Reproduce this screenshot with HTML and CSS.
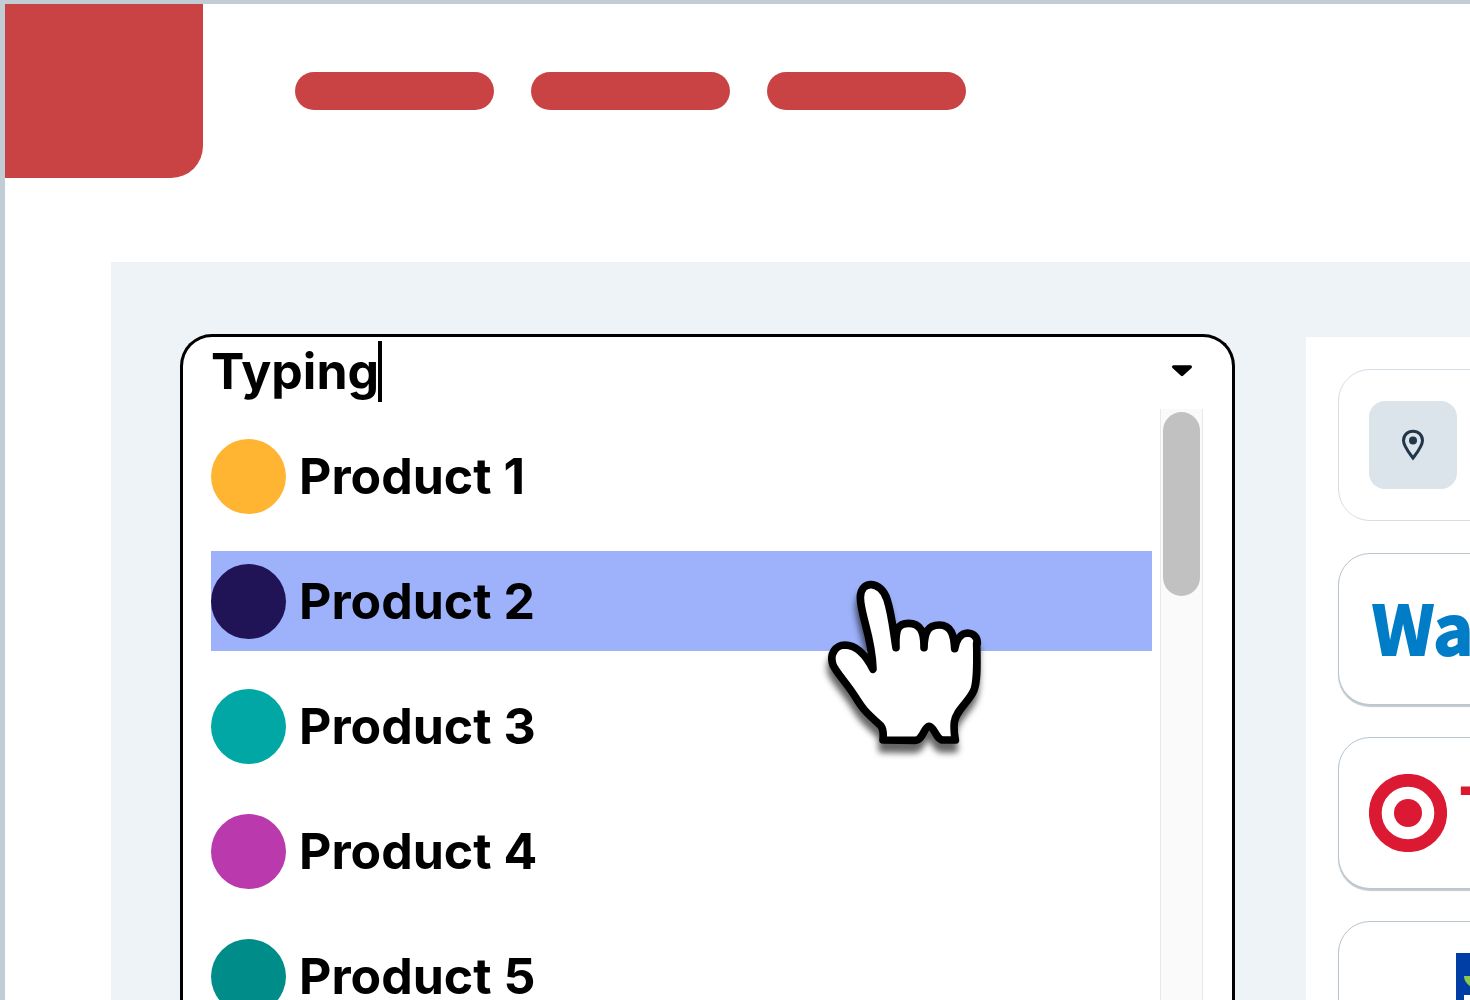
FILE: index.html
```html
<!DOCTYPE html>
<html lang="en">
<head>
<meta charset="utf-8">
<title>Product finder</title>
<link rel="stylesheet" href="styles.css">
</head>
<body>
<div class="frame">
  <header class="header">
    <div class="brand"></div>
    <nav class="nav" aria-label="Main">
      <a class="nav-pill" href="#" aria-label="Menu item 1"></a>
      <a class="nav-pill" href="#" aria-label="Menu item 2"></a>
      <a class="nav-pill" href="#" aria-label="Menu item 3"></a>
    </nav>
  </header>
  <main class="finder">
    <section class="combo">
      <div class="combo-head">
        <input class="combo-input" type="text" value="Typing" aria-label="Search products">
        <span class="caret"></span>
        <button class="combo-toggle" type="button" aria-label="Toggle product list">
          <svg width="22" height="12" viewBox="0 0 22 12"><path d="M2.5 1.8H19.500L11 9.700Z" stroke="#000" stroke-width="3" stroke-linejoin="round"/></svg>
        </button>
      </div>
      <div class="combo-body">
        <ul class="options" role="listbox" aria-label="Products">
          <li class="option" role="option"><span class="dot amber"></span>Product 1</li>
          <li class="option active" role="option" aria-selected="true"><span class="dot navy"></span>Product 2
            <svg class="pointer" width="200" height="210" viewBox="0 0 600 630" aria-hidden="true"><path d="M189 328C187 232 151 165 151 112C152 58 214 62 231 118C246 165 250 215 258 263C256 208 263 190 296 190C331 190 343 215 342 263C343 215 354 195 388 195C424 195 432 225 434 266C439 240 452 219 473 219C492 220 502 232 502 250L500 250C502 330 501 365 492 390C478 425 438 450 433 486C431 508 432 520 436 540L400 540C378 540 374 500 357 499C342 500 339 540 316 541L219 540C221 520 219 506 212 497C160 450 158 445 140 417C113 372 80 340 69 315C57 280 78 256 105 255C145 256 170 290 189 328Z" fill="#fff" stroke="#000" stroke-width="23" stroke-linejoin="round"/></svg>
          </li>
          <li class="option" role="option"><span class="dot teal"></span>Product 3</li>
          <li class="option" role="option"><span class="dot magenta"></span>Product 4</li>
          <li class="option" role="option"><span class="dot pine"></span>Product 5</li>
        </ul>
        <div class="scroll-track"><div class="scroll-thumb"></div></div>
      </div>
    </section>
    <aside class="stores">
      <div class="card location">
        <span class="pin-box">
          <svg width="24" height="32" viewBox="0 0 24 32"><path d="M12 2.200C6.500 2.200 2.500 6.200 2.500 11.500C2.500 17 7.500 23 12 29C16.500 23 21.500 17 21.500 11.500C21.500 6.200 17.500 2.200 12 2.200Z" fill="none" stroke="#22364a" stroke-width="3"/><circle cx="12" cy="11.500" r="4" fill="#22364a"/></svg>
        </span>
      </div>
      <a class="card walmart" href="#">Walmart</a>
      <a class="card target" href="#">
        <svg width="78" height="78" viewBox="0 0 78 78" aria-hidden="true"><circle cx="39" cy="39" r="32.700" fill="#fff" stroke="#dc1932" stroke-width="12.800"/><circle cx="39" cy="39" r="14" fill="#dc1932"/></svg>
        TARGET
      </a>
      <a class="card market" href="#" aria-label="Store">
        <svg width="100" height="88" viewBox="0 0 100 88"><path d="M0 0H100V88H0Z" fill="#003da5"/><path d="M8 23H30V40C16 36 8 31 8 23Z" fill="#8cc84b"/><path d="M8 42H92V80H8Z" fill="#fff"/></svg>
      </a>
    </aside>
  </main>
</div>
</body>
</html>
```

FILE: styles.css
```css
* {
  box-sizing: border-box;
}

body {
  margin: 0;
  background: #fff;
  color: #000;
  font-family: "Inter", sans-serif;
}

.frame {
  display: flex;
  flex-direction: column;
  height: 100vh;
  overflow: hidden;
  border-top: 4px solid #c1ccd5;
  border-left: 5px solid #c1ccd5;
}

.header {
  display: flex;
  flex: none;
  gap: 92px;
  margin-bottom: 84px;
}

.brand {
  width: 198px;
  height: 174px;
  border-radius: 0 0 32px 0;
  background: #ca4344;
}

.nav {
  display: flex;
  gap: 37px;
  padding-top: 68px;
}

.nav-pill {
  width: 199px;
  height: 38px;
  border-radius: 19px;
  background: #ca4344;
}

.finder {
  display: flex;
  flex: 1;
  gap: 71px;
  min-height: 0;
  margin-left: 106px;
  padding: 72px 0 0 69px;
  background: #edf3f7;
}

.combo {
  flex: 1;
  display: flex;
  flex-direction: column;
  min-width: 0;
  padding: 0 29px 0 28px;
  border: 3px solid #000;
  border-bottom: 0;
  border-radius: 32px 32px 0 0;
  background: #fff;
}

.combo-head {
  display: flex;
  flex: none;
  align-items: center;
  height: 72px;
  padding-bottom: 4px;
}

.combo-input {
  field-sizing: content;
  padding: 0;
  border: 0;
  outline: 0;
  background: none;
  color: #000;
  font: 700 50px/60px "Inter", sans-serif;
}

.caret {
  width: 4px;
  height: 61px;
  margin-left: -1px;
  background: #000;
}

.combo-toggle {
  display: flex;
  justify-content: center;
  width: 43px;
  margin-left: auto;
  padding: 10px 0;
  border: 0;
  background: none;
}

.combo-body {
  display: flex;
  flex: 1;
  gap: 8px;
  min-height: 0;
}

.options {
  display: flex;
  flex: 1;
  flex-direction: column;
  gap: 25px;
  margin: 0;
  padding: 17px 0 0;
  list-style: none;
}

.option {
  position: relative;
  display: flex;
  flex: none;
  align-items: center;
  gap: 13px;
  height: 100px;
  font-size: 50px;
  font-weight: 700;
  line-height: 60px;
}

.active {
  z-index: 1;
  background: #9db2fa;
}

.dot {
  width: 75px;
  height: 75px;
  border-radius: 50%;
}

.amber {
  background: #ffb532;
}

.navy {
  background: #201457;
}

.teal {
  background: #00a7a5;
}

.magenta {
  background: #ba3aad;
}

.pine {
  background: #008c89;
}

.pointer {
  position: absolute;
  top: 9px;
  left: 599px;
  overflow: visible;
  filter: drop-shadow(-1px 9px 3px rgba(0, 0, 0, 0.6));
}

.scroll-track {
  width: 43px;
  padding: 3px 2px;
  border: 1px solid #e8e8e8;
  border-width: 0 1px;
  background: #fafafa;
}

.scroll-thumb {
  height: 184px;
  border-radius: 19px;
  background: #c1c1c1;
}

.stores {
  display: flex;
  flex: none;
  flex-direction: column;
  gap: 32px;
  width: 164px;
  margin-top: 3px;
  padding: 32px 0 0 32px;
  overflow: hidden;
  background: #fff;
}

.card {
  display: flex;
  flex: none;
  align-items: center;
  width: 600px;
  height: 152px;
  padding-left: 30px;
  border: 1px solid #b9c5cf;
  border-radius: 32px;
  background: #fff;
  box-shadow: 0 2px 1px #c4c9cc;
  text-decoration: none;
}

.location {
  border-color: #d5dee7;
  box-shadow: none;
}

.pin-box {
  display: flex;
  align-items: center;
  justify-content: center;
  width: 88px;
  height: 88px;
  border-radius: 16px;
  background: #dbe3eb;
}

.walmart {
  padding-bottom: 6px;
  padding-left: 33px;
  color: #007dc6;
  font: 700 68px/80px "Noto Sans CJK SC", sans-serif;
  -webkit-text-stroke: 2px #007dc6;
}

.target {
  gap: 13px;
  color: #dc1932;
  font: 700 76px/80px "Liberation Sans", sans-serif;
}

.market {
  padding-left: 117px;
}
```
